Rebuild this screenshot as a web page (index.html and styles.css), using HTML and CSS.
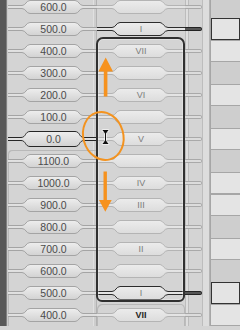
FILE: index.html
```html
<!DOCTYPE html>
<html lang="en">
<head>
    <meta charset="UTF-8">
    <title>Tempo Track</title>
    <link rel="stylesheet" href="styles.css">
</head>
<body>

    <div class="timeline">
        <div class="edge"></div>

        <div class="track values">
            <div class="cell"><svg class="tab" viewBox="0 0 89 22"><use href="#tab-value"/></svg><span>600.0</span></div>
            <div class="cell"><svg class="tab" viewBox="0 0 89 22"><use href="#tab-value"/></svg><span>500.0</span></div>
            <div class="cell"><svg class="tab" viewBox="0 0 89 22"><use href="#tab-value"/></svg><span>400.0</span></div>
            <div class="cell"><svg class="tab" viewBox="0 0 89 22"><use href="#tab-value"/></svg><span>300.0</span></div>
            <div class="cell"><svg class="tab" viewBox="0 0 89 22"><use href="#tab-value"/></svg><span>200.0</span></div>
            <div class="cell"><svg class="tab" viewBox="0 0 89 22"><use href="#tab-value"/></svg><span>100.0</span></div>
            <div class="cell"><svg class="tab" viewBox="0 0 89 22"><use href="#tab-value-on"/></svg><span>0.0</span></div>
            <div class="section">
                <div class="cell"><svg class="tab" viewBox="0 0 89 22"><use href="#tab-value"/></svg><span>1100.0</span></div>
                <div class="cell"><svg class="tab" viewBox="0 0 89 22"><use href="#tab-value"/></svg><span>1000.0</span></div>
                <div class="cell"><svg class="tab" viewBox="0 0 89 22"><use href="#tab-value"/></svg><span>900.0</span></div>
                <div class="cell"><svg class="tab" viewBox="0 0 89 22"><use href="#tab-value"/></svg><span>800.0</span></div>
                <div class="cell"><svg class="tab" viewBox="0 0 89 22"><use href="#tab-value"/></svg><span>700.0</span></div>
                <div class="cell"><svg class="tab" viewBox="0 0 89 22"><use href="#tab-value"/></svg><span>600.0</span></div>
                <div class="cell"><svg class="tab" viewBox="0 0 89 22"><use href="#tab-value"/></svg><span>500.0</span></div>
                <div class="cell"><svg class="tab" viewBox="0 0 89 22"><use href="#tab-value"/></svg><span>400.0</span></div>
            </div>
        </div>

        <div class="track chords">
            <div class="cell"><svg class="tab" viewBox="0 0 88 22"><use href="#tab-chord"/></svg><span></span></div>
            <div class="cell"><svg class="tab" viewBox="0 0 88 22"><use href="#tab-chord-on"/></svg><span>I</span></div>
            <div class="cell"><svg class="tab" viewBox="0 0 88 22"><use href="#tab-chord"/></svg><span>VII</span></div>
            <div class="cell"><svg class="tab" viewBox="0 0 88 22"><use href="#tab-chord"/></svg><span></span></div>
            <div class="cell"><svg class="tab" viewBox="0 0 88 22"><use href="#tab-chord"/></svg><span>VI</span></div>
            <div class="cell"><svg class="tab" viewBox="0 0 88 22"><use href="#tab-chord"/></svg><span></span></div>
            <div class="cell"><svg class="tab" viewBox="0 0 88 22"><use href="#tab-chord"/></svg><span>V</span></div>
            <div class="cell"><svg class="tab" viewBox="0 0 88 22"><use href="#tab-chord"/></svg><span></span></div>
            <div class="cell"><svg class="tab" viewBox="0 0 88 22"><use href="#tab-chord"/></svg><span>IV</span></div>
            <div class="cell"><svg class="tab" viewBox="0 0 88 22"><use href="#tab-chord"/></svg><span>III</span></div>
            <div class="cell"><svg class="tab" viewBox="0 0 88 22"><use href="#tab-chord"/></svg><span></span></div>
            <div class="cell"><svg class="tab" viewBox="0 0 88 22"><use href="#tab-chord"/></svg><span>II</span></div>
            <div class="cell"><svg class="tab" viewBox="0 0 88 22"><use href="#tab-chord"/></svg><span></span></div>
            <div class="cell"><svg class="tab" viewBox="0 0 88 22"><use href="#tab-chord-on"/></svg><span>I</span></div>
            <div class="section">
                <div class="cell strong"><svg class="tab" viewBox="0 0 88 22"><use href="#tab-chord"/></svg><span>VII</span></div>
            </div>
        </div>

        <div class="track stubs">
            <div class="stub"><div class="pill"></div></div>
            <div class="stub on"><div class="pill"></div></div>
            <div class="stub"><div class="pill"></div></div>
            <div class="stub"><div class="pill"></div></div>
            <div class="stub"><div class="pill"></div></div>
            <div class="stub"><div class="pill"></div></div>
            <div class="stub"><div class="pill"></div></div>
            <div class="stub"><div class="pill"></div></div>
            <div class="stub"><div class="pill"></div></div>
            <div class="stub"><div class="pill"></div></div>
            <div class="stub"><div class="pill"></div></div>
            <div class="stub"><div class="pill"></div></div>
            <div class="stub"><div class="pill"></div></div>
            <div class="stub on"><div class="pill"></div></div>
            <div class="stub"><div class="pill"></div></div>
        </div>

        <div class="track boxes">
            <div class="box"></div>
            <div class="box lit on"></div>
            <div class="box lit"></div>
            <div class="box"></div>
            <div class="box lit"></div>
            <div class="box"></div>
            <div class="box lit"></div>
            <div class="box"></div>
            <div class="box lit"></div>
            <div class="box lit"></div>
            <div class="box"></div>
            <div class="box lit"></div>
            <div class="box"></div>
            <div class="box lit on"></div>
            <div class="box lit"></div>
        </div>
    </div>

    <!-- drag selection + hint overlay -->
    <div class="selection"></div>
    <svg class="hint" viewBox="0 0 50 170">
        <ellipse cx="23.3" cy="86" rx="20" ry="24.3" transform="rotate(-16 23.3 86)" fill="none" stroke="#f39320" stroke-width="2"/>
        <polygon points="25.7,7.5 33,21.5 27.4,21.5 27.4,46.5 23.8,46.5 23.8,21.5 18.4,21.5" fill="#f6921e"/>
        <polygon points="23.5,121.5 26.9,121.5 26.9,150 31.7,150 25.3,161.7 19,150 23.5,150" fill="#f6921e"/>
        <g stroke="#fff" stroke-width="3" stroke-linecap="round" opacity="0.6">
            <path d="M23 80.5H28M25.5 80.5V93.5M23 93.5H28"/>
        </g>
        <path d="M22.8 80.5H28.2M25.5 80.5V93.5M22.8 93.5H28.2" stroke="#111" fill="none"/>
        <polygon points="23.3,81 27.7,81 25.5,84.2" fill="#111"/>
        <polygon points="23.3,93 27.7,93 25.5,89.8" fill="#111"/>
    </svg>

    <svg class="sprite" aria-hidden="true">
        <defs>
            <linearGradient id="g-value" x1="0" y1="0" x2="0" y2="1">
                <stop offset="0" stop-color="#eeeeee"/>
                <stop offset="1" stop-color="#d2d2d2"/>
            </linearGradient>
            <linearGradient id="g-chord" x1="0" y1="0" x2="0" y2="1">
                <stop offset="0" stop-color="#ececec"/>
                <stop offset="1" stop-color="#dcdcdc"/>
            </linearGradient>
        </defs>
        <symbol id="tab-value" viewBox="0 0 89 22">
            <path d="M0 9.5H14C18 9.5 18 4.5 22 4.5H67C71 4.5 71 9.5 75 9.5H89V12.5H75C71 12.5 71 17.5 67 17.5H22C18 17.5 18 12.5 14 12.5H0Z" fill="url(#g-value)"/>
            <path d="M0 9.5H14C18 9.5 18 4.5 22 4.5H67C71 4.5 71 9.5 75 9.5H89M0 12.5H14C18 12.5 18 17.5 22 17.5H67C71 17.5 71 12.5 75 12.5H89" fill="none" stroke="#a4a4a4"/>
        </symbol>
        <symbol id="tab-value-on" viewBox="0 0 89 22">
            <path d="M0 9.5H13C18 9.5 17 3.5 22 3.5H67C72 3.5 71 9.5 76 9.5H89V12.5H76C71 12.5 72 18.5 67 18.5H22C17 18.5 18 12.5 13 12.5H0Z" fill="url(#g-value)"/>
            <path d="M0 9.5H13C18 9.5 17 3.5 22 3.5H67C72 3.5 71 9.5 76 9.5H89M0 12.5H13C18 12.5 17 18.5 22 18.5H67C72 18.5 71 12.5 76 12.5H89" fill="none" stroke="#262626"/>
        </symbol>
        <symbol id="tab-chord" viewBox="0 0 88 22">
            <path d="M0 9.5H15C19 9.5 19 4.5 23 4.5H63C66 4.5 67 9.5 71 9.5H88V12.5H71C67 12.5 66 17.5 63 17.5H23C19 17.5 19 12.5 15 12.5H0Z" fill="url(#g-chord)"/>
            <path d="M0 9.5H15C19 9.5 19 4.5 23 4.5H63C66 4.5 67 9.5 71 9.5H88M0 12.5H15C19 12.5 19 17.5 23 17.5H63C66 17.5 67 12.5 71 12.5H88" fill="none" stroke="#b4b4b4"/>
        </symbol>
        <symbol id="tab-chord-on" viewBox="0 0 88 22">
            <path d="M0 9.5H15C19 9.5 19 4.5 23 4.5H63C66 4.5 67 9.5 71 9.5H88V12.5H71C67 12.5 66 17.5 63 17.5H23C19 17.5 19 12.5 15 12.5H0Z" fill="url(#g-chord)"/>
            <path d="M0 9.5H15C19 9.5 19 4.5 23 4.5H63C66 4.5 67 9.5 71 9.5H88M0 12.5H15C19 12.5 19 17.5 23 17.5H63C66 17.5 67 12.5 71 12.5H88" fill="none" stroke="#2c2c2c"/>
        </symbol>
    </svg>

</body>
</html>
```

FILE: styles.css
```css
* {
    box-sizing: border-box;
}
body {
    margin: 0;
    width: 240px;
    height: 330px;
    overflow: hidden;
    position: relative;
    background-color: #d4d4d4;
    font-family: "Liberation Sans", Arial, sans-serif;
}
.timeline {
    display: flex;
    margin-top: -4px;
}
.edge {
    width: 7px;
    background-color: #585858;
    border-right: 1px solid #808080;
}
.track {
    display: flex;
    flex-direction: column;
}
.cell {
    height: 22px;
    display: grid;
}
.cell > * {
    grid-area: 1 / 1;
}
.tab {
    display: block;
    width: 100%;
    height: 22px;
}
.cell span {
    align-self: center;
    text-align: center;
    line-height: 1;
}
.section {
    box-shadow: inset 1px 1px 0 #b8b8b8;
    border-top-left-radius: 4px;
}

/* value column */
.values {
    width: 90px;
    padding-left: 1px;
    background: linear-gradient(to right, #cbcbcb 0 1px, #d4d4d4 1px 86px, #e0e0e0 86px 87px, #cdcdcd 87px 89px, #b2b2b2 89px 90px);
}
.values .cell span {
    font-size: 10.5px;
    color: #4b4b4b;
    padding: 0 20px 0 22px;
}

/* chord column */
.chords {
    width: 88px;
}
.chords .cell span {
    font-size: 9px;
    color: #7c7c7c;
    padding: 0 23px;
}
.chords .cell.strong span {
    color: #262626;
    font-weight: bold;
}
.chords .section {
    box-shadow: inset 1px 1px 0 #b8b8b8, inset -1px 0 0 #b8b8b8;
    border-radius: 5px 5px 0 0;
}

/* link stubs */
.stubs {
    width: 25px;
    background: linear-gradient(to right, #bcbcbc 0 1px, #dedede 1px 3px, #bcbcbc 3px 4px, #d4d4d4 4px 17px, #bdbdbd 17px 18px, #dddddd 18px 24px, #b4b4b4 24px 25px);
}
.stub {
    height: 22px;
}
.pill {
    width: 17px;
    height: 4px;
    margin-top: 9px;
    background-color: #dcdcdc;
    border: 1px solid #a9a9a9;
    border-left: 0;
    border-radius: 0 2px 2px 0;
}
.stub.on .pill {
    background-color: #555;
    border-color: #222;
}

/* region boxes */
.boxes {
    width: 30px;
    border-left: 1px solid #a6a6a6;
}
.box {
    height: 22px;
    background-color: #cecece;
}
.box.lit {
    background-color: #e4e4e4;
    box-shadow: inset 0 1px 0 #a6a6a6, inset 0 -1px 0 #a6a6a6;
}
.box.on {
    box-shadow: inset 0 0 0 1px #333;
}

/* overlays */
.selection {
    position: absolute;
    left: 96px;
    top: 37px;
    width: 89px;
    height: 265px;
    border: 2px solid #303030;
    border-radius: 7px 7px 6px 6px;
    box-shadow: inset 0 0 0 1px rgba(255, 255, 255, 0.3);
}
.hint {
    position: absolute;
    left: 80px;
    top: 50px;
    width: 50px;
    height: 170px;
}
.sprite {
    display: block;
    width: 0;
    height: 0;
}
```
